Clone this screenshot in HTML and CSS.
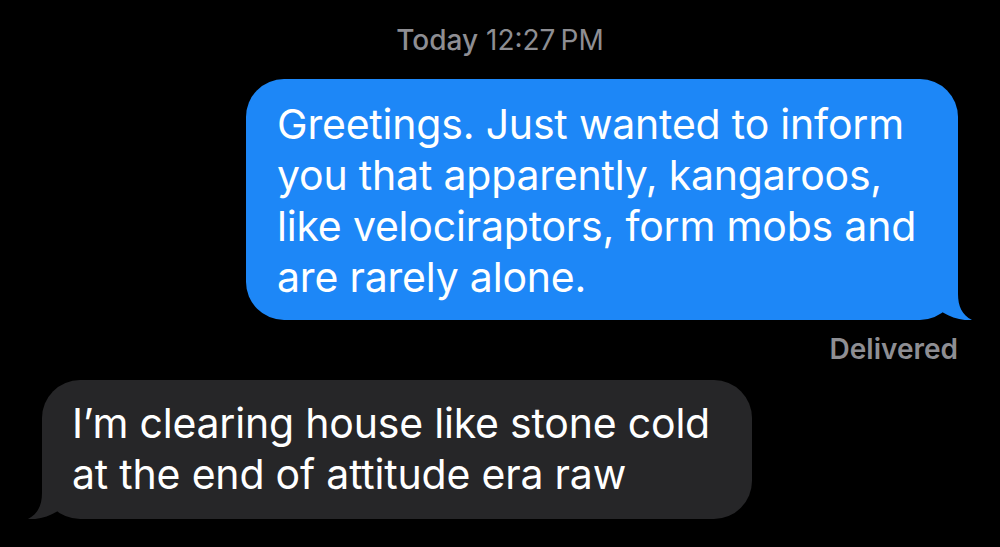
FILE: index.html
```html
<!DOCTYPE html>
<html>
<head>
<meta charset="utf-8">
<link rel="stylesheet" href="styles.css">
</head>
<body>
<div class="thread">
  <div class="stamp"><span class="day">Today</span> 12:27&#8239;PM</div>
  <div class="row row-out">
    <div class="bubble bubble-out">
      Greetings. Just wanted to inform<br>you that apparently, kangaroos,<br>like velociraptors, form mobs and<br>are rarely alone.
      <svg class="tail tail-out" width="40" height="40" viewBox="0 0 40 40"><path d="M0 0 H24 V14 C24 26 28 35 38 40 C29 41 18 38 8 32 L0 32 Z" fill="#1d87f7"/></svg>
    </div>
  </div>
  <div class="status">Delivered</div>
  <div class="row row-in">
    <div class="bubble bubble-in">
      I’m clearing house like stone cold<br>at the end of attitude era raw
      <svg class="tail tail-in" width="40" height="40" viewBox="0 0 40 40"><path d="M40 0 H16 V14 C16 26 12 35 2 40 C11 41 22 38 32 32 L40 32 Z" fill="#262628"/></svg>
    </div>
  </div>
</div>
</body>
</html>
```
FILE: styles.css
```css
html, body {
  margin: 0;
  padding: 0;
  background: #000;
}
body {
  width: 1000px;
  height: 547px;
  overflow: hidden;
  font-family: Inter, "Noto Sans", sans-serif;
  -webkit-font-smoothing: antialiased;
}
.thread {
  display: flex;
  flex-direction: column;
  padding: 24px 42px 0 42px;
}
.stamp {
  text-align: center;
  color: #8e8e93;
  font-size: 28px;
  line-height: 32px;
}
.day {
  font-weight: 500;
}
.row {
  display: flex;
}
.row-out {
  justify-content: flex-end;
  margin-top: 23px;
}
.row-in {
  justify-content: flex-start;
  margin-top: 16px;
}
.bubble {
  position: relative;
  font-size: 41px;
  line-height: 51px;
  letter-spacing: -0.2px;
  color: #fff;
  border-radius: 38px;
  white-space: nowrap;
}
.bubble-out {
  background: #1d87f7;
  width: 651px;
  padding: 20px 30px 17px 31px;
}
.bubble-in {
  background: #262628;
  width: 650px;
  padding: 18px 30px 19px 30px;
}
.tail {
  position: absolute;
  bottom: 0;
}
.tail-out {
  right: -16px;
}
.tail-in {
  left: -16px;
}
.status {
  text-align: right;
  color: #8e8e93;
  font-size: 28px;
  font-weight: 600;
  line-height: 30px;
  margin-top: 14px;
}
```
